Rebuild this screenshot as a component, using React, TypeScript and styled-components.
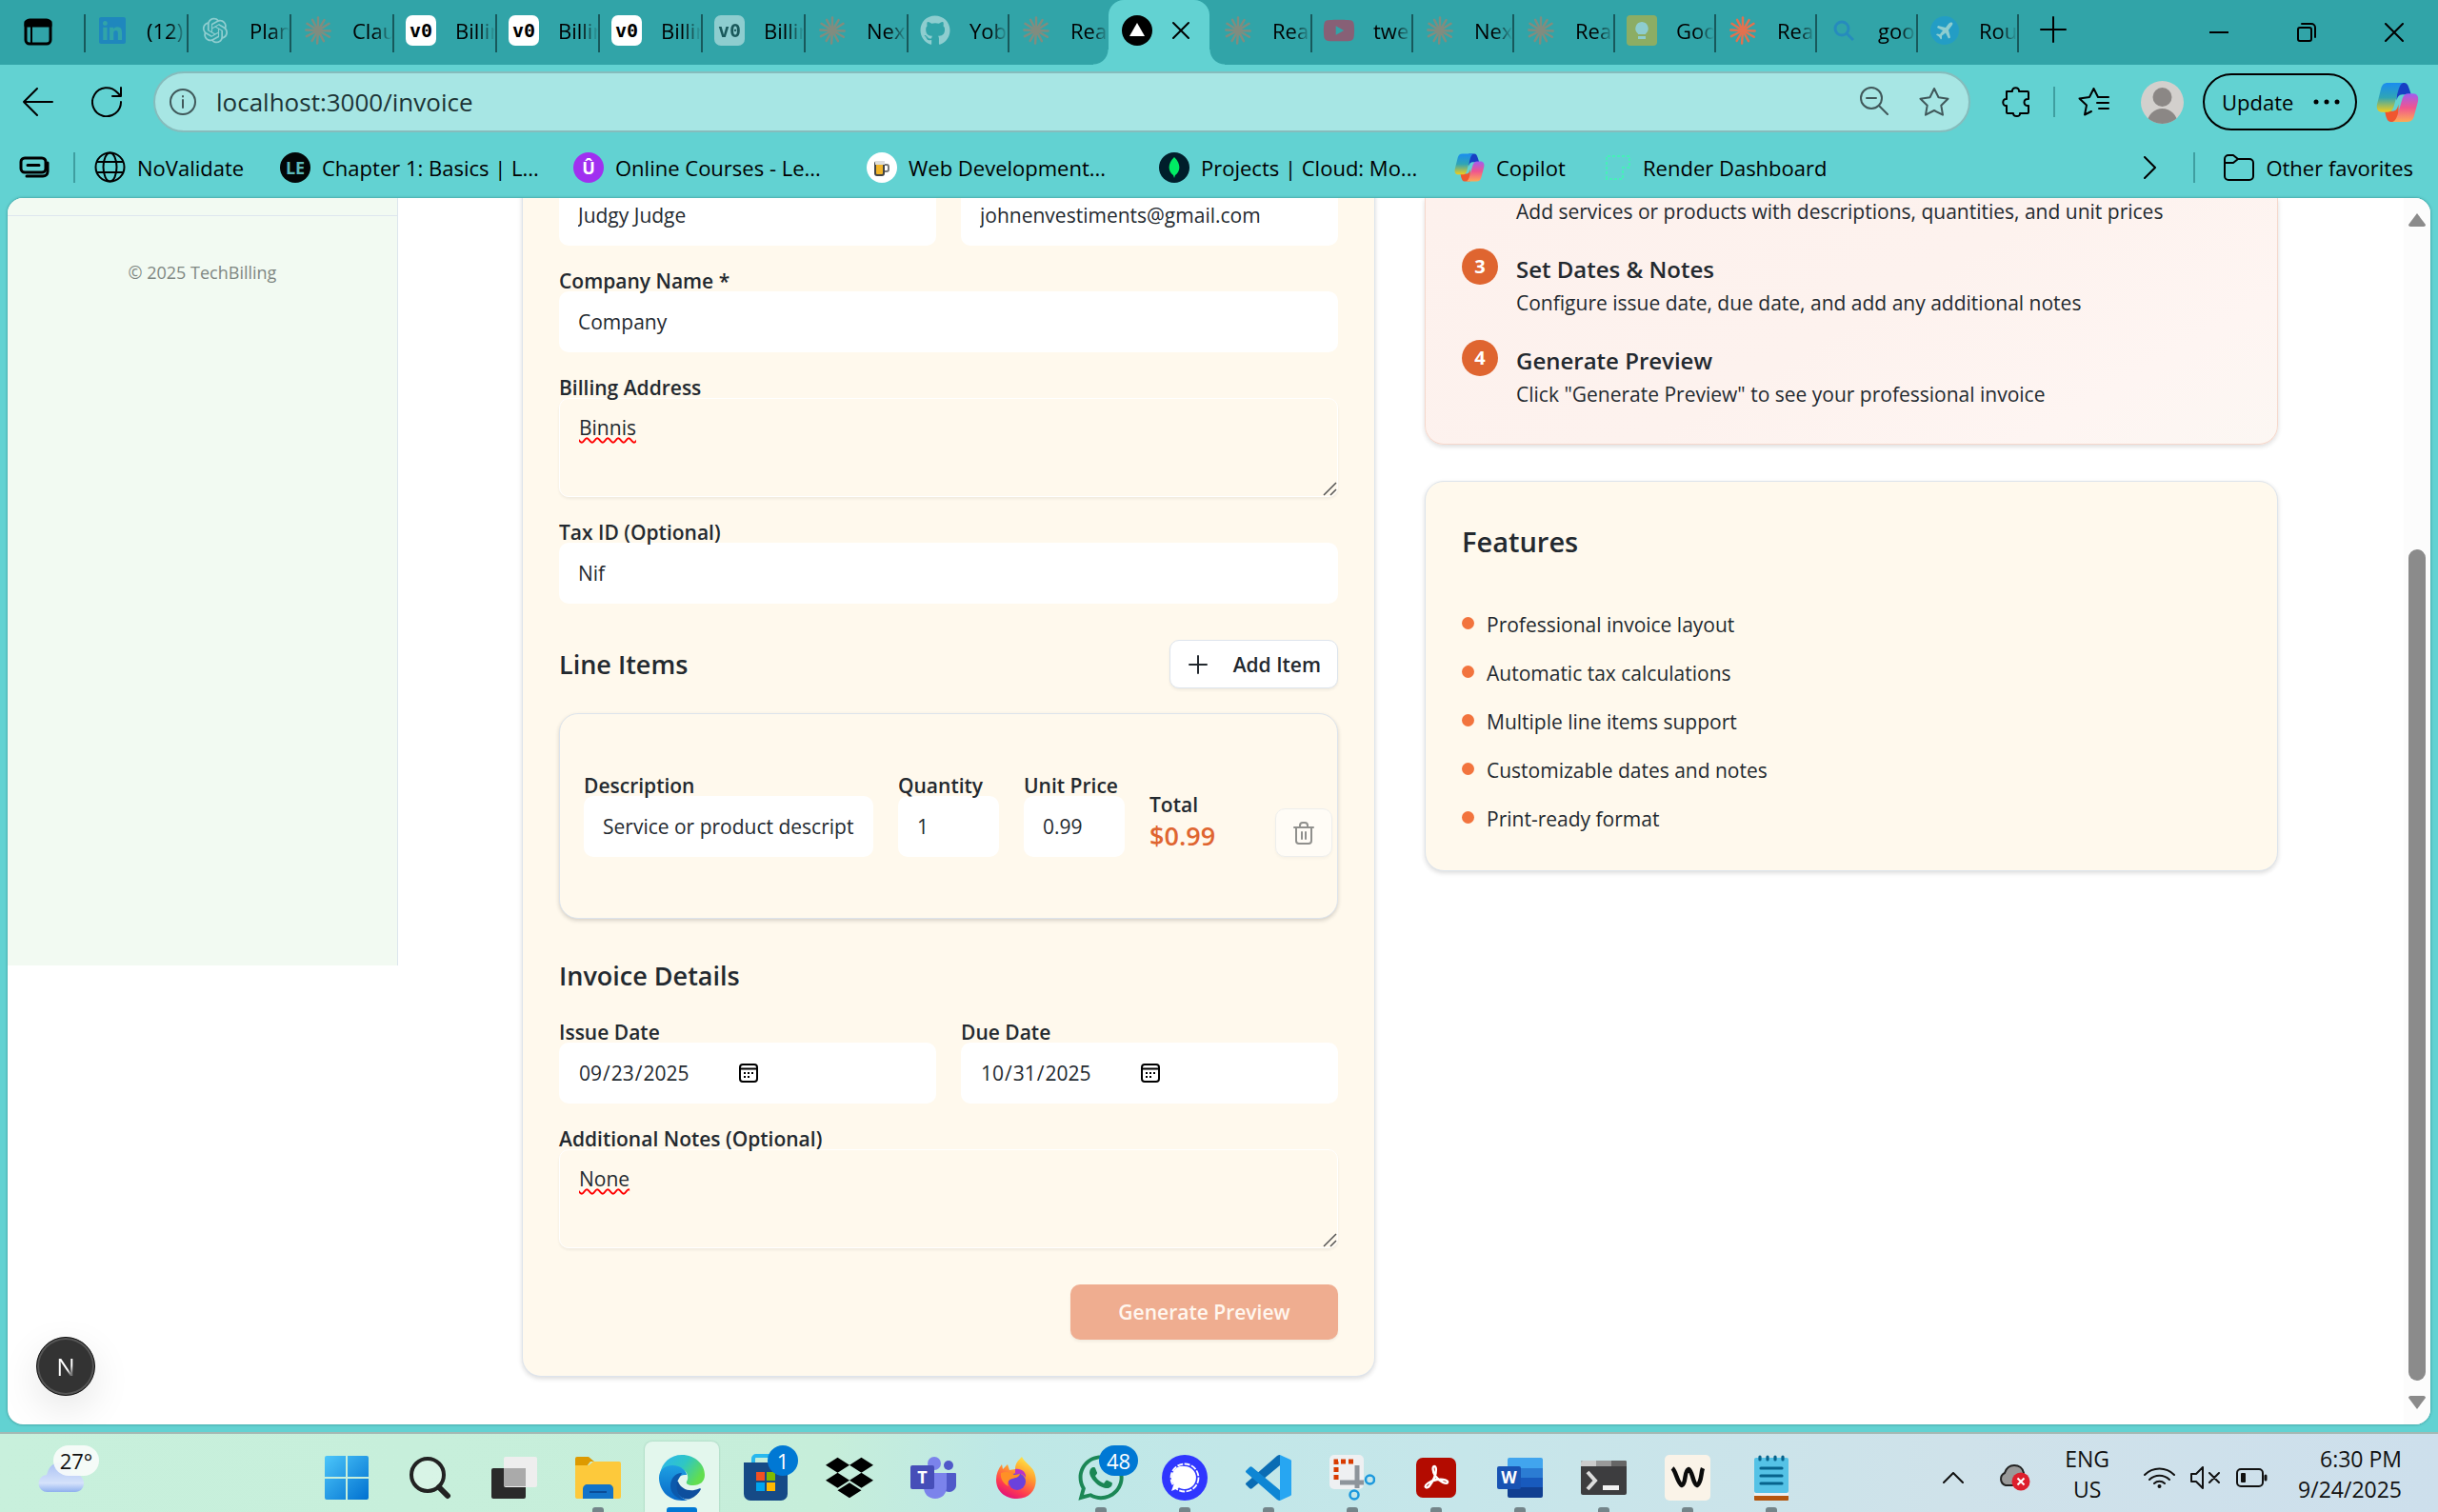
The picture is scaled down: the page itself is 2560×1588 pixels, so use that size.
import React from "react";
import styled, { createGlobalStyle, css } from "styled-components";
import { FaGithub, FaLinkedin, FaYoutube, FaDropbox, FaWhatsapp } from "react-icons/fa";
import { RiOpenaiFill } from "react-icons/ri";

const GlobalStyle = createGlobalStyle`
  *, *::before, *::after { box-sizing: border-box; }
  html, body, #root { height: 100%; margin: 0; }
  body {
    font-family: "Open Sans", "Noto Sans", sans-serif;
    font-size: 21px;
    color: #23292f;
    overflow: hidden;
  }
  button, input, textarea { font: inherit; color: inherit; margin: 0; }
  button { background: none; border: 0; padding: 0; }
  h2, p, ul, ol { margin: 0; padding: 0; font-weight: inherit; }
  ul, ol { list-style: none; }
  a { color: inherit; text-decoration: none; }
  svg { display: block; flex: none; }
`;

/* ---------- window shell ---------- */

const Shell = styled.div`
  display: flex;
  flex-direction: column;
  height: 100vh;
  background: #62d2d2;
`;

const TabStrip = styled.header`
  display: flex;
  flex: none;
  height: 68px;
  background: #31a4a8;
  color: #000;
`;

const TabActions = styled.button`
  width: 88px;
  flex: none;
  padding: 0 0 2px 24px;
  display: flex;
  align-items: center;
  position: relative;
  &::after {
    content: "";
    position: absolute;
    right: -2px;
    top: 15px;
    width: 2px;
    height: 40px;
    background: #17595c;
  }
`;

const TabItem = styled.div<{ $wide?: boolean; $active?: boolean; $plain?: boolean }>`
  position: relative;
  display: flex;
  align-items: center;
  flex: none;
  gap: 20px;
  width: ${(p) => (p.$wide ? 108 : 106)}px;
  height: 64px;
  padding-left: 14px;
  font-size: 22px;
  ${(p) =>
    !p.$plain &&
    !p.$active &&
    css`
      &::after {
        content: "";
        position: absolute;
        right: -2px;
        top: 15px;
        width: 2px;
        height: 40px;
        background: #17595c;
      }
    `}
  ${(p) =>
    p.$active &&
    css`
      height: 68px;
      padding-bottom: 4px;
      background: #62d2d2;
      border-radius: 16px 16px 0 0;
      &::before,
      &::after {
        content: "";
        position: absolute;
        bottom: 0;
        width: 16px;
        height: 16px;
      }
      &::before {
        left: -16px;
        background: radial-gradient(circle at 0 0, transparent 15px, #62d2d2 16px);
      }
      &::after {
        right: -16px;
        background: radial-gradient(circle at 100% 0, transparent 15px, #62d2d2 16px);
      }
    `}
`;

const TabTitle = styled.span`
  flex: 1;
  min-width: 0;
  overflow: hidden;
  white-space: nowrap;
  mask-image: linear-gradient(to right, #000 55%, transparent);
`;

const Favicon = styled.span<{ $dim?: boolean }>`
  display: flex;
  align-items: center;
  justify-content: center;
  width: 32px;
  height: 32px;
  flex: none;
  opacity: ${(p) => (p.$dim ? 0.45 : 1)};
`;

const V0Mark = styled.span`
  display: flex;
  align-items: center;
  justify-content: center;
  width: 32px;
  height: 32px;
  border-radius: 7px;
  background: #fff;
  color: #000;
  font-family: "DejaVu Sans Mono", monospace;
  font-size: 20px;
  font-weight: 700;
  line-height: 32px;
`;

const IconButton = styled.button`
  display: flex;
  align-items: center;
  justify-content: center;
  flex: none;
`;

const NewTab = styled(IconButton)`
  width: 76px;
  height: 62px;
`;

const WindowControls = styled.div`
  display: flex;
  margin-left: auto;
  height: 68px;
  button { width: 92px; }
`;

const Toolbar = styled.nav`
  display: flex;
  align-items: center;
  flex: none;
  height: 78px;
  padding: 0 20px 0 24px;
  color: #000;
`;

const NavButtons = styled.div`
  display: flex;
  gap: 40px;
  margin-right: 32px;
`;

const AddressBar = styled.div`
  display: flex;
  align-items: center;
  flex: 1;
  height: 64px;
  padding: 0 20px 0 14px;
  border: 2px solid #86bcbc;
  border-radius: 32px;
  background: #a7e6e4;
  color: #40585a;
`;

const AddressInput = styled.input`
  flex: 1;
  min-width: 0;
  margin-left: 20px;
  padding: 0;
  border: 0;
  outline: 0;
  background: transparent;
  font-size: 26px;
  color: #1c3436;
`;

const AddressActions = styled.div`
  display: flex;
  gap: 32px;
`;

const ToolGroup = styled.div<{ $gap: number }>`
  display: flex;
  align-items: center;
  gap: ${(p) => p.$gap}px;
  margin-left: 33px;
`;

const Rule = styled.span`
  width: 2px;
  height: 32px;
  flex: none;
  background: #3f9ea0;
`;

const UpdateButton = styled.button`
  display: flex;
  align-items: center;
  justify-content: space-between;
  width: 162px;
  height: 60px;
  padding: 0 16px 0 18px;
  border: 2px solid #000;
  border-radius: 30px;
  font-size: 22px;
`;

const BookmarkBar = styled.nav`
  display: flex;
  align-items: center;
  flex: none;
  height: 62px;
  padding: 0 26px 3px 20px;
  font-size: 22px;
  color: #000;
  white-space: nowrap;
  > ${Rule} { margin: 0 20px 0 25px; }
`;

const Bookmark = styled.a<{ $width?: number }>`
  display: flex;
  align-items: center;
  gap: 12px;
  width: ${(p) => (p.$width ? p.$width + "px" : "auto")};
`;

const BookmarkEnd = styled.div`
  display: flex;
  align-items: center;
  margin-left: auto;
  gap: 30px;
  ${Rule} { margin-left: 8px; }
`;

const RoundMark = styled.span<{ $bg: string; $color: string }>`
  display: flex;
  align-items: center;
  justify-content: center;
  flex: none;
  width: 32px;
  height: 32px;
  border-radius: 50%;
  background: ${(p) => p.$bg};
  color: ${(p) => p.$color};
  font-size: 18px;
  font-weight: 700;
`;

/* ---------- page ---------- */

const Viewport = styled.div`
  position: relative;
  display: flex;
  flex: 1;
  min-height: 0;
  margin: 0 8px 8px;
  overflow: hidden;
  border-radius: 16px;
  background: #fff;
  box-shadow: 0 0 3px rgba(0, 60, 60, 0.5);
`;

const Sidebar = styled.aside`
  flex: none;
  align-self: flex-start;
  width: 410px;
  min-height: 806px;
  padding-top: 18px;
  border-right: 1px solid #dde6ee;
  background: #f2faf2;
`;

const SidebarFooter = styled.p`
  padding-top: 46px;
  border-top: 1px solid #dde6ee;
  text-align: center;
  font-size: 18px;
  line-height: 26px;
  color: #7f8782;
`;

const Main = styled.main`
  display: grid;
  grid-template-columns: 1fr 1fr;
  align-items: start;
  gap: 52px;
  flex: 1;
  padding: 0 132px 0 130px;
`;

const Card = styled.section`
  border: 1px solid #dde4ec;
  border-radius: 20px;
  background: #fff9ed;
  box-shadow: 0 2px 5px rgba(0, 0, 0, 0.14);
`;

const FormCard = styled(Card).attrs({ as: "form" })`
  display: flex;
  flex-direction: column;
  gap: 26px;
  margin-top: -14px;
  padding: 0 38px 38px;
  border-top: 0;
  border-radius: 0 0 20px 20px;
`;

const Pair = styled.div`
  display: grid;
  grid-template-columns: 1fr 1fr;
  gap: 26px;
`;

const Field = styled.div`
  display: flex;
  flex-direction: column;
  min-width: 0;
`;

const labelText = css`
  position: relative;
  line-height: 22px;
  font-weight: 600;
  white-space: nowrap;
`;

const Label = styled.label`
  ${labelText}
`;

const TextInput = styled.input`
  display: flex;
  align-items: center;
  width: 100%;
  height: 64px;
  padding: 0 20px;
  border: 0;
  border-radius: 10px;
  outline: 0;
  background: #fff;
  appearance: textfield;
  &::-webkit-inner-spin-button { display: none; }
  &::-webkit-datetime-edit { flex: none; padding: 0; }
  &::-webkit-calendar-picker-indicator {
    width: 20px;
    height: 20px;
    margin: 0 0 0 10px;
    padding: 0;
    background: url("data:image/svg+xml;utf8,<svg xmlns='http://www.w3.org/2000/svg' viewBox='0 0 20 20' fill='none' stroke='black' stroke-width='2'><rect x='1' y='1' width='18' height='18' rx='3'/><path d='M1 5.500h18'/><path d='M5 10h2m2 0h2m2 0h2M5 14h2m2 0h2'/></svg>") center / 20px 20px no-repeat;
  }
`;

const TextArea = styled.textarea`
  display: block;
  width: 100%;
  height: 104px;
  padding: 14px 20px;
  border: 1px solid #fff;
  border-radius: 10px;
  outline: 0;
  background: transparent;
  box-shadow: 0 2px 3px rgba(0, 0, 0, 0.06);
  line-height: 32px;
  resize: vertical;
  text-decoration: underline wavy #f00 2px;
  text-underline-offset: 2px;
  text-decoration-skip-ink: none;
  &::-webkit-resizer {
    background: url("data:image/svg+xml;utf8,<svg xmlns='http://www.w3.org/2000/svg' viewBox='0 0 15 15' fill='none' stroke='%23555' stroke-width='1.500'><path d='M1 14L14 1M8 14l6-6'/></svg>") center / 15px 15px no-repeat;
  }
`;

const SectionTitle = styled.h2`
  font-size: 27px;
  line-height: 44px;
  font-weight: 600;
`;

const SectionHead = styled.div`
  display: flex;
  align-items: center;
  justify-content: space-between;
  margin-top: 12px;
`;

const Details = styled.div`
  display: flex;
  flex-direction: column;
  gap: 26px;
  margin-top: 12px;
`;

const outlineButton = css`
  display: flex;
  align-items: center;
  height: 51px;
  border: 1px solid #dde4ec;
  border-radius: 10px;
  background: #fff;
  box-shadow: 0 2px 3px rgba(0, 0, 0, 0.06);
`;

const AddButton = styled.button`
  ${outlineButton}
  gap: 27px;
  padding: 0 17px 0 19px;
  font-weight: 600;
`;

const ItemCard = styled(Card)`
  display: grid;
  grid-template-columns: repeat(12, minmax(0, 1fr));
  align-items: end;
  gap: 26px;
  padding: 64px 25px;
  box-shadow: 0 2px 4px rgba(0, 0, 0, 0.16);
`;

const Cell = styled(Field)<{ $span: number }>`
  grid-column: span ${(p) => p.$span};
`;

const TotalLabel = styled.span`
  ${labelText}
`;

const TotalValue = styled.output`
  font-size: 27px;
  line-height: 44px;
  font-weight: 600;
  color: #df6530;
`;

const TrashButton = styled.button`
  ${outlineButton}
  justify-content: center;
  width: 60px;
  opacity: 0.5;
`;

const SubmitButton = styled.button`
  align-self: flex-end;
  width: 281px;
  height: 58px;
  margin-top: 12px;
  border-radius: 10px;
  background: #efad90;
  box-shadow: 0 2px 3px rgba(0, 0, 0, 0.06);
  color: #fff7ef;
  font-weight: 600;
`;

const Column = styled.div`
  display: flex;
  flex-direction: column;
  gap: 38px;
`;

const StepsCard = styled(Card)`
  padding: 1px 38px 39px;
  border-color: #f6d8cc;
  border-top: 0;
  border-radius: 0 0 20px 20px;
  background: linear-gradient(150deg, #fdf1ed, #fdf2ee 50%, #fef5f2 80%, #fcf7f3);
`;

const Steps = styled.ol`
  display: flex;
  flex-direction: column;
  gap: 26px;
`;

const Step = styled.li`
  display: flex;
  align-items: flex-start;
`;

const StepNumber = styled.span`
  width: 38px;
  height: 38px;
  margin-right: 19px;
  border-radius: 50%;
  background: #df6530;
  color: #fff;
  font-size: 20px;
  line-height: 38px;
  font-weight: 700;
  text-align: center;
`;

const StepText = styled.p`
  line-height: 26px;
`;

const LeadStepText = styled(StepText)`
  padding-left: 57px;
`;

const StepTitle = styled.h2`
  font-size: 24px;
  line-height: 44px;
  font-weight: 600;
`;

const FeaturesCard = styled(Card)`
  padding: 38px;
`;

const FeaturesTitle = styled.h2`
  margin-bottom: 46px;
  font-size: 29px;
  line-height: 50px;
  font-weight: 600;
`;

const FeatureList = styled.ul`
  display: flex;
  flex-direction: column;
  gap: 19px;
`;

const Feature = styled.li`
  display: flex;
  gap: 13px;
  line-height: 32px;
  &::before {
    content: "";
    width: 13px;
    height: 13px;
    margin-top: 8px;
    border-radius: 50%;
    background: #f2743e;
  }
`;

const Scrollbar = styled.div`
  display: flex;
  flex-direction: column;
  align-items: center;
  flex: none;
  width: 28px;
  padding: 16px 0;
  background: #fcfcfc;
  fill: #8b8b8b;
`;

const ScrollTrack = styled.div`
  display: flex;
  flex-direction: column;
  justify-content: flex-end;
  flex: 1;
  padding: 16px 0;
`;

const ScrollThumb = styled.div`
  width: 18px;
  height: 73%;
  border-radius: 9px;
  background: #8b8b8b;
`;

const DevBadge = styled.button`
  position: absolute;
  left: 30px;
  bottom: 30px;
  display: flex;
  align-items: center;
  justify-content: center;
  width: 62px;
  height: 62px;
  border: 1px solid #111;
  border-radius: 50%;
  background: #333;
  box-shadow: inset 0 0 0 2px #555, 0 14px 40px rgba(0, 0, 0, 0.1);
  span {
    font-size: 26px;
    background: linear-gradient(135deg, #fff 60%, #777 75%);
    background-clip: text;
    color: transparent;
  }
`;

/* ---------- taskbar ---------- */

const Taskbar = styled.footer`
  display: flex;
  flex: none;
  height: 84px;
  padding: 0 38px 0 40px;
  border-top: 2px solid #a3b9b4;
  background: linear-gradient(95deg, #c8f0dc 0%, #c6eeda 34%, #bee8e6 41%, #c6e6ea 60%, #cfe2ea 80%, #cddfec 100%);
  color: #111;
  font-size: 23px;
  line-height: 32px;
`;

const Weather = styled.button`
  position: relative;
  flex: none;
  width: 280px;
  display: flex;
  align-items: center;
  padding-top: 8px;
`;

const Pill = styled.span<{ $left: number; $width: number; $light?: boolean }>`
  position: absolute;
  top: 12px;
  left: ${(p) => p.$left}px;
  width: ${(p) => p.$width}px;
  height: 32px;
  border-radius: 16px;
  background: ${(p) => (p.$light ? "rgba(248,252,250,.92)" : "#0078d4")};
  color: ${(p) => (p.$light ? "#111" : "#fff")};
  font-size: 22px;
  line-height: 32px;
  text-align: center;
`;

const Apps = styled.div`
  display: flex;
  flex: none;
`;

const AppButton = styled.button<{ $running?: boolean; $focused?: boolean }>`
  position: relative;
  display: flex;
  align-items: center;
  justify-content: center;
  width: 88px;
  padding-top: 10px;
  ${(p) =>
    p.$focused &&
    css`
      &::before {
        content: "";
        position: absolute;
        inset: 8px 5px 0;
        border-radius: 8px 8px 0 0;
        background: rgba(255, 255, 255, 0.5);
        box-shadow: 0 0 2px rgba(0, 80, 60, 0.3);
      }
    `}
  ${(p) =>
    (p.$running || p.$focused) &&
    css`
      &::after {
        content: "";
        position: absolute;
        bottom: 0;
        left: 50%;
        width: ${p.$focused ? 32 : 12}px;
        height: 5px;
        transform: translateX(-50%);
        border-radius: 3px 3px 0 0;
        background: ${p.$focused ? "#0078d4" : "#74858a"};
      }
    `}
  svg { position: relative; }
`;

const Tray = styled.div`
  display: flex;
  align-items: center;
  margin-left: auto;
  padding-top: 10px;
  gap: 36px;
`;

const TrayText = styled.div<{ $right?: boolean }>`
  margin-top: -8px;
  text-align: ${(p) => (p.$right ? "right" : "center")};
`;

const TrayIcons = styled.div`
  display: flex;
  align-items: center;
  gap: 16px;
  margin-right: -4px;
`;

/* ---------- drawings ---------- */

const line = { fill: "none", stroke: "currentColor", strokeWidth: 2, strokeLinecap: "round", strokeLinejoin: "round" } as const;

const RAYS = [0, 31, 58, 92, 120, 152, 184, 210, 243, 272, 302, 332];

const Spark = () => (
  <svg width="30" height="32" viewBox="-16 -16 32 32" stroke="#e2714f" strokeWidth="2.600" strokeLinecap="round">
    {RAYS.map((a, i) => (
      <path key={a} d={`M0 0V${i % 2 ? -13.5 : -14.5}`} transform={`rotate(${a})`} />
    ))}
    <circle r="3" fill="#e2714f" stroke="none" />
  </svg>
);

const CopilotMark = ({ size, id }: { size: number; id: string }) => (
  <svg width={size} height={size} viewBox="0 0 44 44">
    <defs>
      <linearGradient id={id + "a"} x1="0" y1="0" x2="0" y2="1">
        <stop offset="0" stopColor="#1a8cf0" />
        <stop offset=".5" stopColor="#2fa5b5" />
        <stop offset="1" stopColor="#f2cc1c" />
      </linearGradient>
      <linearGradient id={id + "b"} x1="0" y1="0" x2="0" y2="1">
        <stop offset="0" stopColor="#a15cf0" />
        <stop offset=".5" stopColor="#f0558e" />
        <stop offset="1" stopColor="#fdab55" />
      </linearGradient>
    </defs>
    <path d="M21 2h8c3 0 4 3 5 6l2 6h-9c-4 0-5 3-6 6z" fill="#1740c4" />
    <path d="M23 42h-8c-3 0-4-3-5-6l-1-5h8c4 0 5-3 6-7z" fill="#f0562f" />
    <path d="M12 2h16c-3 1-4 4-5 7l-5 18c-1 3-3 5-6 5H6c-4 0-6-3-5-8l4-16c1-4 3-6 7-6z" fill={`url(#${id}a)`} />
    <path d="M32 42H17c3-1 4-4 5-7l5-17c1-3 3-5 6-5h5c4 0 6 3 5 8l-4 15c-1 4-3 6-7 6z" fill={`url(#${id}b)`} />
  </svg>
);

const SignalMark = () => (
  <svg width="48" height="48" viewBox="0 0 48 48">
    <circle cx="24" cy="24" r="24" fill="#2f36ff" />
    <circle cx="24" cy="24" r="14.500" fill="none" stroke="#fff" strokeWidth="1.800" strokeDasharray="6 1.500" />
    <path d="M24 12a12 12 0 1 1-6 22.400L10 38l2.500-7A12 12 0 0 1 24 12z" fill="#fff" />
  </svg>
);

const WindowsMark = () => (
  <svg width="46" height="46" viewBox="0 0 46 46">
    <defs>
      <linearGradient id="win" gradientUnits="userSpaceOnUse" x1="0" y1="0" x2="46" y2="46">
        <stop stopColor="#4cc6fa" />
        <stop offset="1" stopColor="#0070d0" />
      </linearGradient>
    </defs>
    <path d="M2 0h20v22H0V2a2 2 0 0 1 2-2zM24 0h20a2 2 0 0 1 2 2v20H24zM0 24h22v22H2a2 2 0 0 1-2-2zM24 24h22v20a2 2 0 0 1-2 2H24z" fill="url(#win)" />
  </svg>
);

const SearchMark = () => (
  <svg width="46" height="46" viewBox="0 0 46 46" fill="none" stroke="#222" strokeWidth="4">
    <circle cx="20" cy="20" r="17" fill="rgba(255,255,255,.3)" />
    <path d="M32 33l9 9" strokeWidth="6" strokeLinecap="round" />
  </svg>
);

const TaskViewMark = () => (
  <svg width="48" height="46" viewBox="0 0 48 46">
    <rect x="0" y="13" width="36" height="32" rx="2" fill="#2a2a2a" />
    <rect x="13" y="1" width="35" height="32" rx="2" fill="#eee" />
    <rect x="13" y="13" width="23" height="19" fill="#aaa" />
  </svg>
);

const FolderMark = () => (
  <svg width="48" height="44" viewBox="0 0 48 44">
    <path d="M2 0h12l6 5h-4l-4 5H0V2a2 2 0 0 1 2-2z" fill="#dd9a00" />
    <path d="M0 9h14l5-4h27a2 2 0 0 1 2 2v35a2 2 0 0 1-2 2H2a2 2 0 0 1-2-2z" fill="#fdc93b" />
    <path d="M8 44V34c0-3 2-5 5-5h22c3 0 5 2 5 5v10z" fill="#1273c8" />
    <path d="M15 37h18" stroke="#0a4c98" strokeWidth="2" />
  </svg>
);

const EdgeMark = () => (
  <svg width="48" height="48" viewBox="0 0 48 48">
    <defs>
      <linearGradient id="eg1" x1="0" y1="0" x2="1" y2=".5">
        <stop stopColor="#2bb4f2" />
        <stop offset=".55" stopColor="#2fc6c4" />
        <stop offset="1" stopColor="#62de4e" />
      </linearGradient>
      <linearGradient id="eg2" x1="0" y1="0" x2="0" y2="1">
        <stop stopColor="#1ea0e2" />
        <stop offset="1" stopColor="#0868c8" />
      </linearGradient>
    </defs>
    <path d="M1 20C3 8 12 0 24 0c14 0 24 10 24 21 0 7-5 11-12 11-6 0-8-2-7-4 3-4 1-13-9-15C11 11 4 14 1 20z" fill="url(#eg1)" />
    <path d="M0 24c0-8 6-13 14-13 9 0 15 6 15 10-8-1-11 5-11 10 0 8 5 15 12 16.500-3 .5-4 .5-6 .5C10 48 0 37 0 24z" fill="url(#eg2)" />
    <path d="M18 28c-3 12 7 21 15 18 5-2 9-6 11-10 0-1-1-1-2-.5-9 4-19 1-22-7.500z" fill="#0e4f9e" />
    <path d="M24 19c-7 0-12 6-12 14 0 7 6 13 14 14.500C19 43 18 35 19 29c1-4 4-7 5-10z" fill="#0c59ac" />
  </svg>
);

const StoreMark = () => (
  <svg width="46" height="50" viewBox="0 0 46 50">
    <path d="M10 12V5a3 3 0 0 1 3-3h20a3 3 0 0 1 3 3v7" fill="none" stroke="#29b8ee" strokeWidth="4" />
    <path d="M0 9h46v33a7 7 0 0 1-7 7H7a7 7 0 0 1-7-7z" fill="#164a86" />
    <path d="M13 19h9v9h-9z" fill="#f25022" />
    <path d="M24 19h9v9h-9z" fill="#7fba00" />
    <path d="M13 30h9v9h-9z" fill="#00a4ef" />
    <path d="M24 30h9v9h-9z" fill="#ffb900" />
  </svg>
);

const TeamsMark = () => (
  <svg width="48" height="44" viewBox="0 0 48 44">
    <circle cx="40" cy="9" r="5" fill="#5059c9" />
    <circle cx="25" cy="7" r="7" fill="#7b83eb" />
    <path d="M34 17h13a1 1 0 0 1 1 1v12c0 4-4 7-7 7s-5-1-7-3z" fill="#5059c9" />
    <path d="M14 17h24v15c0 7-5 12-12 12s-12-5-12-12z" fill="#7b83eb" />
    <rect x="0" y="9" width="25" height="25" rx="2" fill="#464eb8" />
    <text x="12.500" y="28" textAnchor="middle" fontSize="18" fontWeight="700" fill="#fff">T</text>
  </svg>
);

const FirefoxMark = () => (
  <svg width="44" height="46" viewBox="0 0 44 46">
    <defs>
      <linearGradient id="ff" x1=".8" y1="0" x2=".3" y2="1">
        <stop stopColor="#fff04a" />
        <stop offset=".4" stopColor="#ff9a2e" />
        <stop offset=".75" stopColor="#ff3b50" />
        <stop offset="1" stopColor="#e0107c" />
      </linearGradient>
    </defs>
    <path d="M27 1c2 5 9 9 12 14 7 14 0 30-17 30C9 45 0 37 0 25 0 19 2 14 6 9l1 5 5-5 2 6 6-1c0-6 3-9 7-13z" fill="url(#ff)" />
    <circle cx="22" cy="27" r="9" fill="#6b41dc" />
    <path d="M5 18c5-2 10-1 14 2l6-1c-1 4-5 4-8 5-4 1-6 4-4 8-5-2-9-8-8-14z" fill="#ff9026" />
    <path d="M20 14c6-1 12 3 11 9-2-4-6-5-11-4z" fill="#b833c9" />
  </svg>
);

const CodeMark = () => (
  <svg width="48" height="48" viewBox="0 0 48 48">
    <path d="M0 31l4 4c1 1 2 1 3 0L36 11V0c-1 0-2 .5-3 1L1 29c-1 1-1 1-1 2z" fill="#0a6cb4" />
    <path d="M0 17l4-4c1-1 2-1 3 0l29 24v11c-1 0-2-.5-3-1L1 19c-1-1-1-1-1-2z" fill="#0e86d4" />
    <path d="M36 0l11 5c1 .5 1 1 1 2v34c0 1 0 1.500-1 2l-11 5z" fill="#27a6f2" />
  </svg>
);

const SnipMark = () => (
  <svg width="48" height="48" viewBox="0 0 48 48" fill="none">
    <rect width="36" height="36" rx="5" fill="#eef0f2" />
    <path d="M7 26V7h19" stroke="#d83b01" strokeWidth="5" strokeDasharray="5 3" />
    <path d="M29 11v24M11 29h25" stroke="#8d949b" strokeWidth="5" />
    <circle cx="42.500" cy="26" r="4.500" stroke="#1c98dd" strokeWidth="2.500" />
    <circle cx="26" cy="42" r="4.500" stroke="#1c98dd" strokeWidth="2.500" />
  </svg>
);

const AcrobatMark = () => (
  <svg width="42" height="42" viewBox="0 0 42 42">
    <rect width="42" height="42" rx="7" fill="#b30b00" />
    <path d="M10 31c-2-2 5-7 12-8s12 1 11 3-8 0-13-7c-3-5-3-10-1-10s3 5 0 12-7 12-9 10z" fill="none" stroke="#fff" strokeWidth="2.400" />
  </svg>
);

const WordMark = () => (
  <svg width="48" height="42" viewBox="0 0 48 42">
    <path d="M13 0h33a2 2 0 0 1 2 2v9H11V2a2 2 0 0 1 2-2z" fill="#41a5ee" />
    <path d="M11 11h37v10H11z" fill="#2b7cd3" />
    <path d="M11 21h37v10H11z" fill="#185abd" />
    <path d="M11 31h37v9a2 2 0 0 1-2 2H13a2 2 0 0 1-2-2z" fill="#103f91" />
    <rect y="9" width="25" height="24" rx="2" fill="#1853b3" />
    <text x="12.500" y="27" textAnchor="middle" fontSize="17" fontWeight="700" fill="#fff">W</text>
  </svg>
);

const TerminalMark = () => (
  <svg width="48" height="36" viewBox="0 0 48 36">
    <rect width="48" height="36" rx="2" fill="#3d3d3f" />
    <path d="M0 2a2 2 0 0 1 2-2h14v6H0z" fill="#ccc" />
    <path d="M16 0h16v6H16z" fill="#999" />
    <path d="M32 0h14a2 2 0 0 1 2 2v4H32z" fill="#666" />
    <path d="M7 12l8 9-8 9" fill="none" stroke="#ddd" strokeWidth="4" />
    <path d="M23 26h17v5H23z" fill="#f2f2f2" />
  </svg>
);

const WaveMark = () => (
  <svg width="48" height="48" viewBox="0 0 48 48">
    <rect width="48" height="48" rx="5" fill="#faf3e8" />
    <path d="M8 14c4 3 5 15 10 18 5-2 2-15 7-17 5 3 4 15 9 17 5-3 4-14 6-18" fill="none" stroke="#0b0b0b" strokeWidth="4.500" strokeLinejoin="round" />
  </svg>
);

const NotepadMark = () => (
  <svg width="36" height="48" viewBox="0 0 36 48">
    <rect y="40" width="36" height="8" rx="1" fill="#b4560f" />
    <rect y="38" width="36" height="5" fill="#eee" />
    <rect y="3" width="36" height="37" rx="2" fill="#55c2e6" />
    <path d="M6 2v3M14 2v3M22 2v3M30 2v3M7 14h22M7 22h22M7 30h22" stroke="#07638c" strokeWidth="3.200" strokeLinecap="round" />
  </svg>
);

/* ---------- data ---------- */

type TabData = { icon: React.ReactNode; title: string; dim?: boolean; wide?: boolean; plain?: boolean };

const v0 = <V0Mark>v0</V0Mark>;

const LEFT_TABS: TabData[] = [
  { icon: <FaLinkedin size={32} color="#0a66d8" />, title: "(12)", dim: true, wide: true },
  { icon: <RiOpenaiFill size={32} color="#fff" />, title: "Plan", dim: true, wide: true },
  { icon: <Spark />, title: "Clau", dim: true, wide: true },
  { icon: v0, title: "Billin", wide: true },
  { icon: v0, title: "Billin", wide: true },
  { icon: v0, title: "Billin", wide: true },
  { icon: v0, title: "Billin", dim: true, wide: true },
  { icon: <Spark />, title: "Nex", dim: true, wide: true },
  { icon: <FaGithub size={32} color="#fff" />, title: "Yob", dim: true },
  { icon: <Spark />, title: "Rea", dim: true, plain: true },
];

const RIGHT_TABS: TabData[] = [
  { icon: <Spark />, title: "Rea", dim: true },
  { icon: <FaYoutube size={34} color="#f0103a" />, title: "twe", dim: true },
  { icon: <Spark />, title: "Nex", dim: true },
  { icon: <Spark />, title: "Rea", dim: true },
  {
    icon: (
      <svg width="32" height="32" viewBox="0 0 32 32">
        <rect width="32" height="32" rx="4" fill="#fcba12" />
        <path d="M16 7a7 7 0 0 1 4 12.500V20h-8v-.5A7 7 0 0 1 16 7zM12 22h8v3h-8z" fill="#fff" />
      </svg>
    ),
    title: "Goo",
    dim: true,
  },
  { icon: <Spark />, title: "Rea" },
  {
    icon: (
      <svg width="22" height="22" viewBox="0 0 22 22" fill="none" stroke="#1a6fd8" strokeWidth="3">
        <circle cx="9" cy="9" r="7" />
        <path d="M14 14l7 7" />
      </svg>
    ),
    title: "goo",
    dim: true,
  },
  {
    icon: (
      <svg width="30" height="30" viewBox="0 0 30 30">
        <circle cx="15" cy="15" r="15" fill="#1496e8" />
        <path d="M23 7c-1-1-3 0-4 1l-3 4-8-2-1 2 6 3-3 4-3-.5-1 1 3 2 2 3 1-1v-3l4-3 3 6 2-1-2-8 3-4c1-1 2-3 1-3.500z" fill="#fff" />
      </svg>
    ),
    title: "Rou",
    dim: true,
  },
];

const FEATURES = [
  "Professional invoice layout",
  "Automatic tax calculations",
  "Multiple line items support",
  "Customizable dates and notes",
  "Print-ready format",
];

const Tab = ({ tab }: { tab: TabData }) => (
  <TabItem $wide={tab.wide} $plain={tab.plain}>
    <Favicon $dim={tab.dim}>{tab.icon}</Favicon>
    <TabTitle>{tab.title}</TabTitle>
  </TabItem>
);

const FormField = ({ id, label, value, type = "text" }: { id: string; label: string; value: string; type?: string }) => (
  <Field>
    <Label htmlFor={id}>{label}</Label>
    <TextInput id={id} type={type} defaultValue={value} />
  </Field>
);

/* ---------- regions ---------- */

const BrowserChrome = () => (
  <>
    <TabStrip>
      <TabActions aria-label="Tab actions">
        <svg width="32" height="32" viewBox="0 0 32 32" {...line} strokeWidth={3}>
          <rect x="3" y="4" width="26" height="25" rx="4" />
          <path d="M3 6h26v4H3z" fill="currentColor" />
          <path d="M9 10v19" strokeWidth="2" />
        </svg>
      </TabActions>
      {LEFT_TABS.map((t, i) => (
        <Tab key={i} tab={t} />
      ))}
      <TabItem $active>
        <Favicon>
          <svg width="32" height="32" viewBox="0 0 32 32">
            <circle cx="16" cy="16" r="16" />
            <path d="M16 8l8 14H8z" fill="#fff" />
          </svg>
        </Favicon>
        <IconButton aria-label="Close tab">
          <svg width="20" height="20" viewBox="0 0 20 20" {...line}>
            <path d="M2 2l16 16M18 2L2 18" />
          </svg>
        </IconButton>
      </TabItem>
      {RIGHT_TABS.map((t, i) => (
        <Tab key={i} tab={t} />
      ))}
      <NewTab aria-label="New tab">
        <svg width="28" height="28" viewBox="0 0 28 28" {...line}>
          <path d="M14 1v26M1 14h26" />
        </svg>
      </NewTab>
      <WindowControls>
        <IconButton aria-label="Minimize">
          <svg width="20" height="20" viewBox="0 0 20 20" {...line}>
            <path d="M0 10h20" />
          </svg>
        </IconButton>
        <IconButton aria-label="Restore">
          <svg width="20" height="20" viewBox="0 0 20 20" {...line}>
            <rect x="1" y="5" width="14" height="14" rx="2" />
            <path d="M5 1h10a4 4 0 0 1 4 4v10" />
          </svg>
        </IconButton>
        <IconButton aria-label="Close">
          <svg width="20" height="20" viewBox="0 0 20 20" {...line}>
            <path d="M1 1l18 18M19 1L1 19" />
          </svg>
        </IconButton>
      </WindowControls>
    </TabStrip>

    <Toolbar>
      <NavButtons>
        <IconButton aria-label="Back">
          <svg width="32" height="32" viewBox="0 0 32 32" {...line}>
            <path d="M31 16H1M15 2L1 16l14 14" />
          </svg>
        </IconButton>
        <IconButton aria-label="Refresh">
          <svg width="33" height="32" viewBox="0 0 33 32" {...line}>
            <path d="M31 16A15 15 0 1 1 27 6l3 3M31 1v9h-9" />
          </svg>
        </IconButton>
      </NavButtons>
      <AddressBar>
        <svg width="30" height="30" viewBox="0 0 30 30" {...line}>
          <circle cx="15" cy="15" r="13" />
          <path d="M15 13v8M15 9v.5" />
        </svg>
        <AddressInput aria-label="Address" defaultValue="localhost:3000/invoice" />
        <AddressActions>
          <svg width="30" height="30" viewBox="0 0 30 30" {...line}>
            <circle cx="12" cy="12" r="11" />
            <path d="M20 20l9 9M7 12h10" />
          </svg>
          <svg width="32" height="32" viewBox="0 0 32 32" {...line}>
            <path d="M16 2l4.500 9.200 10 1.500-7.200 7 1.700 10L16 25l-9 4.700 1.700-10-7.200-7 10-1.500z" />
          </svg>
        </AddressActions>
      </AddressBar>
      <ToolGroup $gap={24}>
        <svg width="30" height="32" viewBox="0 0 30 32" {...line}>
          <path d="M5 5h6c-1-5 8-5 7 0h9a1 1 0 0 1 1 1v7c-6-1-6 8 0 7v7a1 1 0 0 1-1 1h-8c1 4-7 4-7 0H6a1 1 0 0 1-1-1v-7c-5 1-5-8 0-7z" />
        </svg>
        <Rule />
        <svg width="33" height="32" viewBox="0 0 33 32" {...line}>
          <path d="M21 11l-4.500-9-4.500 9-10.500 1.500 7.500 7-2 10 7-3.500M22 11h10M20 17h12M22 23h10" />
        </svg>
      </ToolGroup>
      <ToolGroup $gap={20}>
        <svg width="45" height="45" viewBox="0 0 45 45">
          <clipPath id="face"><circle cx="22.500" cy="22.500" r="22.500" /></clipPath>
          <g clipPath="url(#face)">
            <rect width="45" height="45" fill="#d3d0cd" />
            <circle cx="22.500" cy="17" r="10" fill="#8b8785" />
            <circle cx="22.500" cy="45" r="16" fill="#8b8785" />
          </g>
        </svg>
        <UpdateButton>
          Update
          <svg width="28" height="6" viewBox="0 0 28 6">
            <circle cx="3" cy="3" r="2.500" />
            <circle cx="14" cy="3" r="2.500" />
            <circle cx="25" cy="3" r="2.500" />
          </svg>
        </UpdateButton>
        <CopilotMark size={45} id="cp1" />
      </ToolGroup>
    </Toolbar>

    <BookmarkBar>
      <svg width="32" height="24" viewBox="0 0 32 24" {...line} strokeWidth={3}>
        <rect x="2" y="2" width="26" height="15" rx="4" />
        <path d="M9 9.500h12M30 7v9c0 3-2 5-5 5H8" />
      </svg>
      <Rule />
      <Bookmark href="#" $width={195}>
        <svg width="33" height="33" viewBox="0 0 33 33" {...line}>
          <circle cx="16.500" cy="16.500" r="15" />
          <ellipse cx="16.500" cy="16.500" rx="7" ry="15" />
          <path d="M3 11h27M3 22h27" />
        </svg>
        NoValidate
      </Bookmark>
      <Bookmark href="#" $width={308}>
        <RoundMark $bg="#020607" $color="#5cb9ba">LE</RoundMark>
        Chapter 1: Basics | L...
      </Bookmark>
      <Bookmark href="#" $width={308}>
        <RoundMark $bg="#a030f0" $color="#fff">Û</RoundMark>
        Online Courses - Le...
      </Bookmark>
      <Bookmark href="#" $width={307}>
        <RoundMark $bg="#fff" $color="#444">
          <svg width="16" height="18" viewBox="0 0 16 18">
            <rect x="1" y="3" width="9" height="14" rx="2" fill="#f0b429" stroke="#444" strokeWidth="2" />
            <path d="M11 6h2a2 2 0 0 1 2 2v3a2 2 0 0 1-2 2h-2" fill="none" stroke="#777" strokeWidth="2" />
            <path d="M1 2h10v4H1z" fill="#ddd" />
          </svg>
        </RoundMark>
        Web Development...
      </Bookmark>
      <Bookmark href="#" $width={310}>
        <RoundMark $bg="#001e2b" $color="#00ed64">
          <svg width="12" height="24" viewBox="0 0 12 24" fill="currentColor">
            <path d="M6 1c8 8 6 15 1 19l-1 3-1-3C0 16-2 9 6 1z" />
          </svg>
        </RoundMark>
        Projects | Cloud: Mo...
      </Bookmark>
      <Bookmark href="#" $width={158}>
        <CopilotMark size={32} id="cp2" />
        Copilot
      </Bookmark>
      <Bookmark href="#">
        <svg width="28" height="26" viewBox="0 0 28 26" fill="none" stroke="#46f0b8" strokeWidth="2" strokeDasharray="3 2">
          <path d="M2 25V1h24v12h-7v12z" />
        </svg>
        Render Dashboard
      </Bookmark>
      <BookmarkEnd>
        <IconButton aria-label="More bookmarks">
          <svg width="14" height="24" viewBox="0 0 14 24" {...line}>
            <path d="M1 1l11 11L1 23" />
          </svg>
        </IconButton>
        <Rule />
        <Bookmark href="#">
          <svg width="32" height="28" viewBox="0 0 32 28" {...line}>
            <path d="M1 5a4 4 0 0 1 4-4h5l5 4h12a4 4 0 0 1 4 4v14a4 4 0 0 1-4 4H5a4 4 0 0 1-4-4zM1 9h9l5-4" />
          </svg>
          Other favorites
        </Bookmark>
      </BookmarkEnd>
    </BookmarkBar>
  </>
);

const InvoiceForm = () => (
  <FormCard onSubmit={(e: React.FormEvent) => e.preventDefault()}>
    <Pair>
      <TextInput aria-label="Client name" defaultValue="Judgy Judge" />
      <TextInput aria-label="Client email" type="email" defaultValue="johnenvestiments@gmail.com" />
    </Pair>
    <FormField id="company" label="Company Name *" value="Company" />
    <Field>
      <Label htmlFor="address">Billing Address</Label>
      <TextArea id="address" defaultValue="Binnis" />
    </Field>
    <FormField id="tax" label="Tax ID (Optional)" value="Nif" />

    <SectionHead>
      <SectionTitle>Line Items</SectionTitle>
      <AddButton type="button">
        <svg width="20" height="20" viewBox="0 0 20 20" {...line}>
          <path d="M10 1v18M1 10h18" />
        </svg>
        Add Item
      </AddButton>
    </SectionHead>
    <ItemCard>
      <Cell $span={5}>
        <Label htmlFor="description">Description</Label>
        <TextInput id="description" defaultValue="Service or product description" />
      </Cell>
      <Cell $span={2}>
        <Label htmlFor="quantity">Quantity</Label>
        <TextInput id="quantity" type="number" defaultValue="1" />
      </Cell>
      <Cell $span={2}>
        <Label htmlFor="price">Unit Price</Label>
        <TextInput id="price" type="number" step="0.01" defaultValue="0.99" />
      </Cell>
      <Cell $span={2}>
        <TotalLabel>Total</TotalLabel>
        <TotalValue>$0.99</TotalValue>
      </Cell>
      <TrashButton type="button" aria-label="Remove item" disabled>
        <svg width="22" height="24" viewBox="0 0 22 24" {...line}>
          <path d="M1 6h20M7 6V4a3 3 0 0 1 3-3h2a3 3 0 0 1 3 3v2M3 6v14a3 3 0 0 0 3 3h10a3 3 0 0 0 3-3V6M9 11v7M13 11v7" />
        </svg>
      </TrashButton>
    </ItemCard>

    <Details>
      <SectionTitle>Invoice Details</SectionTitle>
      <Pair>
        <FormField id="issued" label="Issue Date" type="date" value="2025-09-23" />
        <FormField id="due" label="Due Date" type="date" value="2025-10-31" />
      </Pair>
      <Field>
        <Label htmlFor="notes">Additional Notes (Optional)</Label>
        <TextArea id="notes" defaultValue="None" />
      </Field>
    </Details>
    <SubmitButton type="submit" disabled>Generate Preview</SubmitButton>
  </FormCard>
);

const Guide = () => (
  <Column>
    <StepsCard>
      <Steps>
        <li>
          <LeadStepText>Add services or products with descriptions, quantities, and unit prices</LeadStepText>
        </li>
        <Step>
          <StepNumber>3</StepNumber>
          <div>
            <StepTitle>Set Dates &amp; Notes</StepTitle>
            <StepText>Configure issue date, due date, and add any additional notes</StepText>
          </div>
        </Step>
        <Step>
          <StepNumber>4</StepNumber>
          <div>
            <StepTitle>Generate Preview</StepTitle>
            <StepText>Click "Generate Preview" to see your professional invoice</StepText>
          </div>
        </Step>
      </Steps>
    </StepsCard>
    <FeaturesCard>
      <FeaturesTitle>Features</FeaturesTitle>
      <FeatureList>
        {FEATURES.map((f) => (
          <Feature key={f}>{f}</Feature>
        ))}
      </FeatureList>
    </FeaturesCard>
  </Column>
);

const SystemTaskbar = () => (
  <Taskbar>
    <Weather aria-label="Weather">
      <svg width="48" height="36" viewBox="0 0 48 36">
        <defs>
          <linearGradient id="cl" x1="0" y1="0" x2="0" y2="1">
            <stop stopColor="#a9c0f2" />
            <stop offset=".7" stopColor="#d5e2fb" />
            <stop offset="1" stopColor="#8fb0ee" />
          </linearGradient>
        </defs>
        <path d="M10 34a9 9 0 0 1-1-18C11 8 16 3 22 3c7 0 12 5 13 12 8-1 13 4 13 10 0 5-4 9-9 9z" fill="url(#cl)" />
      </svg>
      <Pill $left={16} $width={48} $light>27°</Pill>
    </Weather>
    <Apps>
      <AppButton aria-label="Start"><WindowsMark /></AppButton>
      <AppButton aria-label="Search"><SearchMark /></AppButton>
      <AppButton aria-label="Task view"><TaskViewMark /></AppButton>
      <AppButton aria-label="File Explorer" $running><FolderMark /></AppButton>
      <AppButton aria-label="Edge" $focused><EdgeMark /></AppButton>
      <AppButton aria-label="Store"><StoreMark /><Pill $left={46} $width={32}>1</Pill></AppButton>
      <AppButton aria-label="Dropbox"><FaDropbox size={50} color="#000" /></AppButton>
      <AppButton aria-label="Teams"><TeamsMark /></AppButton>
      <AppButton aria-label="Firefox"><FirefoxMark /></AppButton>
      <AppButton aria-label="WhatsApp" $running><FaWhatsapp size={54} color="#1b8755" /><Pill $left={42} $width={41}>48</Pill></AppButton>
      <AppButton aria-label="Signal" $running><SignalMark /></AppButton>
      <AppButton aria-label="VS Code" $running><CodeMark /></AppButton>
      <AppButton aria-label="Snipping Tool" $running><SnipMark /></AppButton>
      <AppButton aria-label="Acrobat" $running><AcrobatMark /></AppButton>
      <AppButton aria-label="Word" $running><WordMark /></AppButton>
      <AppButton aria-label="Terminal" $running><TerminalMark /></AppButton>
      <AppButton aria-label="Wave" $running><WaveMark /></AppButton>
      <AppButton aria-label="Notepad" $running><NotepadMark /></AppButton>
    </Apps>
    <Tray>
      <svg width="22" height="12" viewBox="0 0 22 12" {...line}>
        <path d="M1 11L11 1l10 10" />
      </svg>
      <svg width="34" height="28" viewBox="0 0 34 28">
        <path d="M8 22a7 7 0 0 1-1-13C9 3 13 1 17 1c5 0 9 3 10 8l-4 13z" fill="#999" stroke="#222" strokeWidth="2" />
        <circle cx="24" cy="18" r="9.500" fill="#dd1f2d" />
        <path d="M20.500 14.500l7 7M27.500 14.500l-7 7" stroke="#fff" strokeWidth="2" />
      </svg>
      <TrayText>ENG<br />US</TrayText>
      <TrayIcons>
        <svg width="33" height="24" viewBox="0 0 33 24" {...line}>
          <path d="M1 9a22 22 0 0 1 31 0M6 14a15 15 0 0 1 21 0M11 18a8 8 0 0 1 11 0" />
          <circle cx="16.500" cy="21" r="2" fill="currentColor" stroke="none" />
        </svg>
        <svg width="32" height="24" viewBox="0 0 32 24" {...line}>
          <path d="M1 8h5l7-7v22l-7-7H1zM20 7l10 10M30 7L20 17" />
        </svg>
        <svg width="33" height="22" viewBox="0 0 33 22" {...line} strokeWidth={2}>
          <rect x="1" y="2" width="27" height="18" rx="4" />
          <rect x="5" y="6" width="5" height="10" rx="1" fill="currentColor" stroke="none" />
          <path d="M31 9v4" strokeWidth="3" />
        </svg>
      </TrayIcons>
      <TrayText $right>6:30 PM<br />9/24/2025</TrayText>
    </Tray>
  </Taskbar>
);

export default function App() {
  return (
    <>
      <GlobalStyle />
      <Shell>
        <BrowserChrome />
        <Viewport>
          <Sidebar>
            <SidebarFooter>© 2025 TechBilling</SidebarFooter>
          </Sidebar>
          <Main>
            <InvoiceForm />
            <Guide />
          </Main>
          <Scrollbar>
            <svg width="18" height="14" viewBox="0 0 18 14"><path d="M9 0l9 12c0 1-1 2-2 2H2c-1 0-2-1-2-2z" /></svg>
            <ScrollTrack><ScrollThumb /></ScrollTrack>
            <svg width="18" height="14" viewBox="0 0 18 14"><path d="M9 14L0 2c0-1 1-2 2-2h14c1 0 2 1 2 2z" /></svg>
          </Scrollbar>
          <DevBadge aria-label="Open developer tools"><span>N</span></DevBadge>
        </Viewport>
        <SystemTaskbar />
      </Shell>
    </>
  );
}
